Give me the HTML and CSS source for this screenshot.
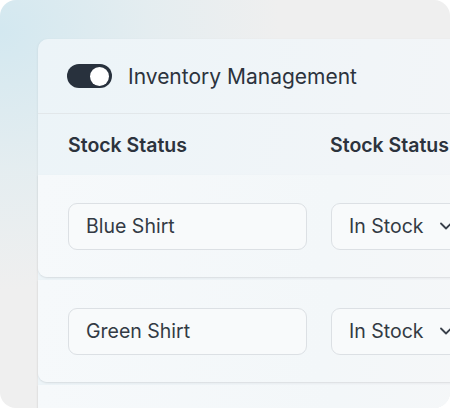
FILE: index.html
```html
<!DOCTYPE html>
<html lang="en">
<head>
    <meta charset="UTF-8">
    <meta name="viewport" content="width=device-width, initial-scale=1.0">
    <title>Inventory Management</title>
    <link rel="stylesheet" href="styles.css">
</head>
<body>
    <div class="frame">
        <div class="card">
            <div class="card-header">
                <span class="toggle"><span class="knob"></span></span>
                <span class="title">Inventory Management</span>
            </div>
            <div class="col-heads">
                <div>Stock Status</div>
                <div>Stock Status</div>
            </div>
            <div class="row">
                <div class="field">Blue Shirt</div>
                <div class="field select">In Stock
                    <svg class="chev" width="14" height="14" viewBox="0 0 14 14"><path d="M2 4.5 L7 9.5 L12 4.5" fill="none" stroke="#3a414b" stroke-width="1.8" stroke-linecap="round" stroke-linejoin="round"/></svg>
                </div>
            </div>
            <div class="row">
                <div class="field">Green Shirt</div>
                <div class="field select">In Stock
                    <svg class="chev" width="14" height="14" viewBox="0 0 14 14"><path d="M2 4.5 L7 9.5 L12 4.5" fill="none" stroke="#3a414b" stroke-width="1.8" stroke-linecap="round" stroke-linejoin="round"/></svg>
                </div>
            </div>
            <div class="row"></div>
        </div>
    </div>
</body>
</html>
```

FILE: styles.css
```css
body {
    margin: 0;
    background: #ffffff;
    font-family: Inter, "Noto Sans", sans-serif;
    color: #2e353f;
}
.frame {
    width: 450px;
    height: 408px;
    border-radius: 16px;
    overflow: hidden;
    padding: 39px 0 0 38px;
    box-sizing: border-box;
    background:
        radial-gradient(ellipse 280px 260px at 0 30px, #d3e8f0 0%, rgba(222, 236, 241, 0.6) 55%, rgba(240, 240, 240, 0) 100%),
        #efefef;
}
.card {
    width: 480px;
    border-radius: 10px 0 0 0;
    background: linear-gradient(100deg, #ecf4f8 0%, #f1f5f8 60%, #f4f5f7 100%);
    box-shadow: -1px 0 2px rgba(0, 0, 0, 0.04);
}
.card-header {
    height: 75px;
    display: flex;
    align-items: center;
    gap: 16px;
    padding-left: 29px;
    border-bottom: 1px solid #e2e7ea;
    box-sizing: border-box;
}
.toggle {
    width: 45px;
    height: 24px;
    border-radius: 12px;
    background: #28313d;
    display: flex;
    align-items: center;
    justify-content: flex-end;
    padding-right: 3px;
    box-sizing: border-box;
}
.knob {
    width: 19px;
    height: 19px;
    border-radius: 50%;
    background: #ffffff;
}
.title {
    font-size: 21px;
    color: #2c333d;
}
.col-heads {
    height: 61px;
    display: grid;
    grid-template-columns: 239px 1fr;
    column-gap: 23px;
    align-items: center;
    padding: 0 30px;
    font-size: 19.5px;
    font-weight: 600;
    color: #2c333d;
}
.row {
    height: 102px;
    display: grid;
    grid-template-columns: 239px 1fr;
    column-gap: 24px;
    align-items: center;
    padding: 0 30px;
    margin-bottom: 3px;
    background: linear-gradient(100deg, #f6f9fb 0%, #f3f7f9 60%, #f6f7f8 100%);
    border-radius: 0 0 0 9px;
    box-shadow: 0 1px 2px rgba(0, 0, 0, 0.1);
}
.field {
    height: 47px;
    border: 1px solid #dce0e4;
    border-radius: 9px;
    background: #f8fafb;
    display: flex;
    align-items: center;
    padding-left: 17px;
    box-sizing: border-box;
    font-size: 19.5px;
    color: #333a44;
}
.chev {
    margin-left: 16px;
}
```
